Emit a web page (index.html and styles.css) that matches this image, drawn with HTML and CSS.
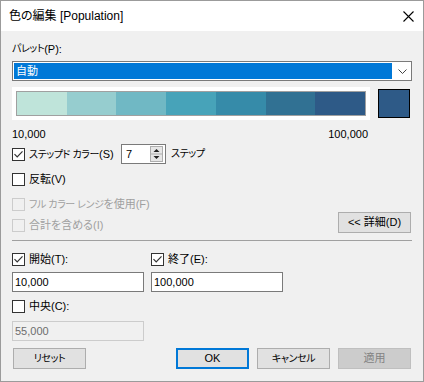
FILE: index.html
```html
<!DOCTYPE html>
<html lang="ja">
<head>
<meta charset="utf-8">
<title>色の編集</title>
<link rel="stylesheet" href="styles.css">
</head>
<body>
<div class="window">
  <div class="titlebar">
    <span class="title">色の編集 [Population]</span>
    <svg class="close" width="11" height="11" viewBox="0 0 11 11"><path d="M0.5 0.5L10.5 10.5M10.5 0.5L0.5 10.5" stroke="#000" stroke-width="1.1" fill="none"/></svg>
  </div>
  <div class="content">
    <div class="label"><span class="k">パレット</span>(P):</div>
    <div class="select">
      <div class="select-value">自動</div>
      <svg class="chev" width="9" height="5" viewBox="0 0 9 5"><path d="M0.5 0.5L4.5 4.5L8.5 0.5" stroke="#444" stroke-width="1" fill="none"/></svg>
    </div>
    <div class="ramp-row">
      <div class="ramp-frame">
        <div class="ramp">
          <div class="seg s1"></div><div class="seg s2"></div><div class="seg s3"></div><div class="seg s4"></div><div class="seg s5"></div><div class="seg s6"></div><div class="seg s7"></div>
        </div>
      </div>
      <div class="swatch"></div>
    </div>
    <div class="range"><span>10,000</span><span>100,000</span></div>

    <div class="row steps">
      <div class="lblwrap">
        <span class="cb"><svg width="11" height="11" viewBox="0 0 11 11"><path d="M1.5 5.2L4.2 8L9.5 2.3" stroke="#333" stroke-width="1.2" fill="none"/></svg></span>
        <span class="nw"><span class="k">ステップド カラー</span>(S)</span>
      </div>
      <div class="spin">
        <span>7</span>
        <svg class="spin-btns" width="13" height="16" viewBox="0 0 13 16">
          <rect x="0.5" y="0.5" width="12" height="15" fill="#e6e6e6" stroke="#adadad"/>
          <line x1="0.5" y1="8" x2="12.5" y2="8" stroke="#adadad"/>
          <path d="M3.5 6L6.5 3L9.5 6Z" fill="#222"/>
          <path d="M3.5 10L6.5 13L9.5 10Z" fill="#222"/>
        </svg>
      </div>
      <span class="steps-unit k">ステップ</span>
    </div>

    <div class="row chk-row reverse">
      <span class="cb"></span><span>反転(V)</span>
    </div>
    <div class="row chk-row full disabled">
      <span class="cb"></span><span class="nw"><span class="k">フル カラー レンジ</span>を使用(F)</span>
    </div>
    <div class="row totals">
      <div class="totals-group disabled">
        <span class="cb"></span><span>合計を含める(I)</span>
      </div>
      <div class="btn detail">&lt;&lt; 詳細(D)</div>
    </div>

    <div class="sep"></div>

    <div class="pair pair-labels">
      <div class="cell">
        <span class="cb"><svg width="11" height="11" viewBox="0 0 11 11"><path d="M1.5 5.2L4.2 8L9.5 2.3" stroke="#333" stroke-width="1.2" fill="none"/></svg></span>
        <span>開始(T):</span>
      </div>
      <div class="cell">
        <span class="cb"><svg width="11" height="11" viewBox="0 0 11 11"><path d="M1.5 5.2L4.2 8L9.5 2.3" stroke="#333" stroke-width="1.2" fill="none"/></svg></span>
        <span>終了(E):</span>
      </div>
    </div>
    <div class="pair pair-inputs">
      <div class="input">10,000</div>
      <div class="input">100,000</div>
    </div>

    <div class="row center-row">
      <span class="cb"></span><span>中央(C):</span>
    </div>
    <div class="input input-disabled">55,000</div>

    <div class="footer">
      <div class="btn reset"><span class="k">リセット</span></div>
      <div class="btn ok">OK</div>
      <div class="btn"><span class="k">キャンセル</span></div>
      <div class="btn btn-disabled">適用</div>
    </div>
  </div>
</div>
</body>
</html>
```
FILE: styles.css
```css
* { box-sizing: border-box; }
html, body { margin: 0; padding: 0; background: #ffffff; }
body {
  font-family: "Liberation Sans", "Noto Sans CJK JP", sans-serif;
  font-size: 11px;
  line-height: 1;
  color: #000;
  font-feature-settings: "palt";
}
.k { font-size: 10px; letter-spacing: -0.4px; }
.nw { white-space: nowrap; }
.window {
  width: 424px;
  height: 382px;
  border: 1px solid #9b9b9b;
  background: #f0f0f0;
  display: flex;
  flex-direction: column;
}
.titlebar {
  flex: none;
  height: 30px;
  background: #fff;
  display: flex;
  align-items: center;
  justify-content: space-between;
  padding: 0 9px 0 8px;
}
.title { font-size: 12px; }
.close { display: block; }
.content {
  padding: 0 11px;
  display: flex;
  flex-direction: column;
}
.label {
  height: 16px;
  margin-top: 10px;
  display: flex;
  align-items: center;
}
.select {
  height: 20px;
  margin-top: 4px;
  border: 1px solid #7a7a7a;
  background: #fff;
  padding: 1px;
  display: flex;
  align-items: center;
}
.select-value {
  flex: none;
  width: 378px;
  height: 16px;
  background: #0078d7;
  color: #fff;
  padding-left: 2px;
  display: flex;
  align-items: center;
}
.chev { margin-left: 6px; display: block; }
.ramp-row {
  margin-top: 6px;
  height: 33px;
  display: flex;
  align-items: center;
}
.ramp-frame {
  width: 358px;
  height: 33px;
  background: #fff;
  padding: 4px;
}
.ramp {
  height: 25px;
  border: 1px solid #a0a0a0;
  display: flex;
}
.seg { flex: 1; }
.s1 { background: #bfe4da; }
.s2 { background: #96cdcf; }
.s3 { background: #70b8c4; }
.s4 { background: #47a3b9; }
.s5 { background: #368ba9; }
.s6 { background: #317193; }
.s7 { background: #2e5a87; }
.swatch {
  width: 32px;
  height: 29px;
  border: 1px solid #000;
  background: #2e5a87;
  margin-left: 8px;
}
.range {
  margin-top: 6px;
  height: 16px;
  width: 358px;
  padding-right: 2px;
  display: flex;
  justify-content: space-between;
  align-items: center;
}
.row { display: flex; align-items: center; }
.cb {
  flex: none;
  width: 13px;
  height: 13px;
  border: 1px solid #333;
  background: #fff;
  margin-right: 4px;
  display: flex;
  align-items: center;
  justify-content: center;
}
.cb svg { display: block; }
.disabled { color: #a0a0a0; }
.disabled .cb { border-color: #cccccc; background: #f0f0f0; }
.steps { margin-top: 2px; height: 20px; }
.lblwrap { width: 109px; flex: none; display: flex; align-items: center; }
.spin {
  flex: none;
  width: 45px;
  height: 20px;
  border: 1px solid #7a7a7a;
  background: #fff;
  display: flex;
  align-items: center;
  padding: 0 2px 0 4px;
}
.spin-btns { margin-left: auto; display: block; }
.steps-unit { margin-left: 5px; }
.chk-row { height: 25px; }
.reverse { margin-top: 3px; }
.full { height: 24px; }
.totals {
  margin-top: -4px;
  height: 21px;
  align-items: flex-end;
}
.totals-group {
  display: flex;
  align-items: center;
  margin-bottom: 1px;
}
.btn {
  flex: none;
  width: 73px;
  height: 21px;
  background: #e1e1e1;
  border: 1px solid #adadad;
  display: flex;
  align-items: center;
  justify-content: center;
}
.detail { margin-left: auto; margin-right: 1px; }
.sep { margin-top: 7px; height: 1px; background: #a0a0a0; }
.pair {
  display: grid;
  grid-template-columns: 132px 132px;
  column-gap: 7px;
}
.pair-labels { margin-top: 8px; height: 21px; }
.cell { display: flex; align-items: center; }
.pair-inputs { margin-top: 2px; height: 20px; }
.input {
  height: 20px;
  border: 1px solid #7a7a7a;
  background: #fff;
  padding-left: 2px;
  display: flex;
  align-items: center;
}
.center-row { margin-top: 4px; height: 21px; }
.input-disabled {
  width: 132px;
  margin-top: 4px;
  border-color: #cccccc;
  background: #f0f0f0;
  color: #6d6d6d;
}
.footer {
  margin-top: 7px;
  display: flex;
  gap: 8px;
}
.reset { margin-left: 1px; }
.ok { margin-left: auto; border: 2px solid #0078d7; }
.btn-disabled {
  margin-right: 1px;
  background: #cccccc;
  border-color: #bfbfbf;
  color: #838383;
}
```
